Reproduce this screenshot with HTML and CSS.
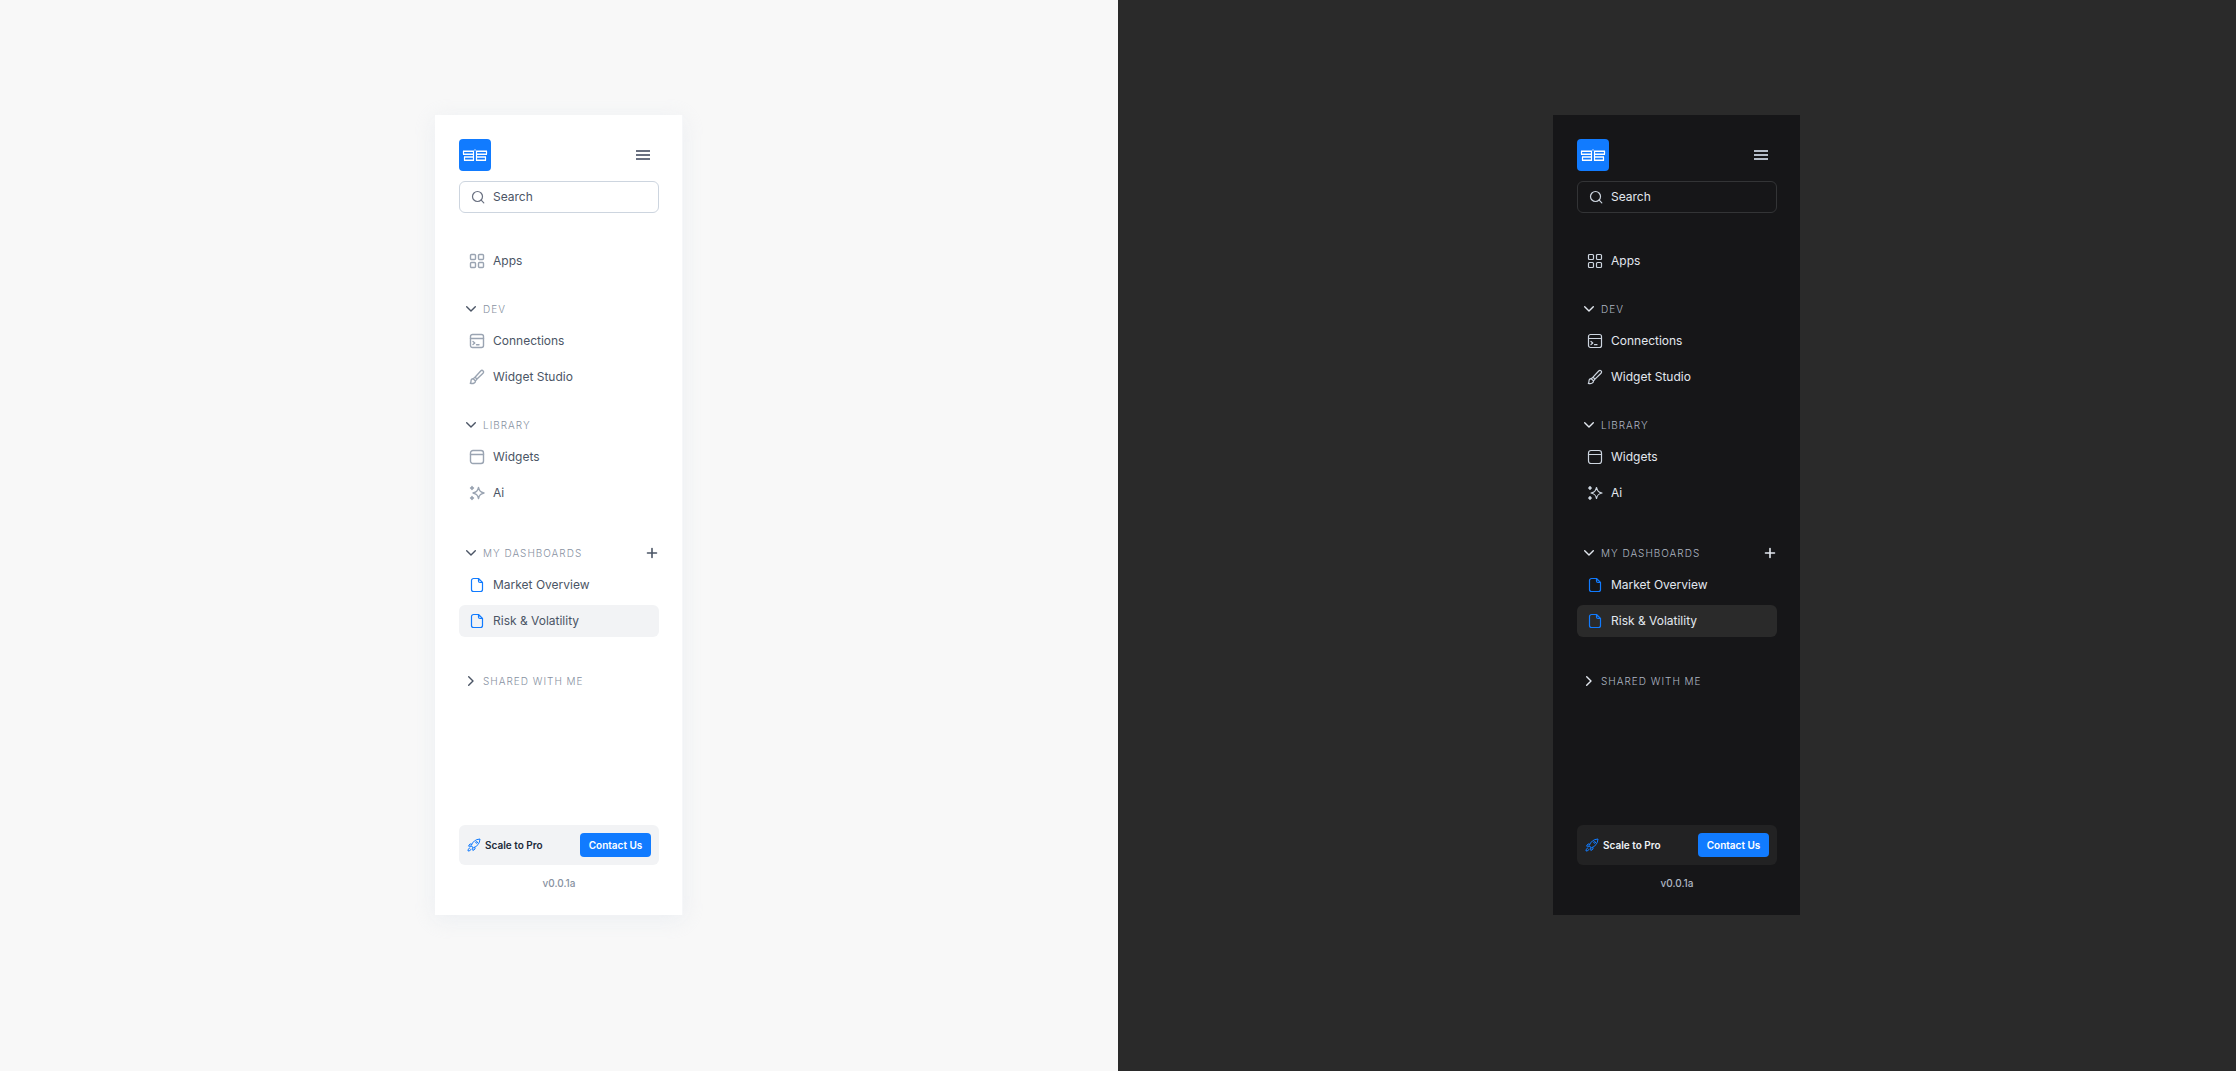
FILE: index.html
```html
<!DOCTYPE html>
<html lang="en">
<head>
<meta charset="utf-8">
<title>Sidebar</title>
<link rel="stylesheet" href="styles.css">
</head>
<body>
<svg class="sprite" aria-hidden="true">
  <symbol id="logo" viewBox="0 0 32 32"><path stroke-width="1.600" d="M4 12.200h11M4 15.200h11M5 18h10M5 21.200h10M17 12.200h11M17 15.200h11M17 18h10M17 21.200h10"/><path stroke-width="1.200" d="M4.500 12v3M14.500 12v9.500M5.500 18v3.500M27.500 12v3M17.500 12v9.500M26.500 18v3.500M15.300 11h1.400"/></symbol>
  <symbol id="menu" viewBox="0 0 16 16"><path d="M1 4h14M1 8h14M1 12h14"/></symbol>
  <symbol id="search" viewBox="0 0 14 14"><circle cx="6.500" cy="6.500" r="5"/><path d="m10.200 10.200 2.600 2.600"/></symbol>
  <symbol id="apps" viewBox="0 0 16 16"><rect x="1.500" y="1.500" width="5" height="5" rx="1"/><rect x="9.500" y="1.500" width="5" height="5" rx="1"/><rect x="1.500" y="9.500" width="5" height="5" rx="1"/><rect x="9.500" y="9.500" width="5" height="5" rx="1"/></symbol>
  <symbol id="terminal" viewBox="0 0 16 16"><rect x="1.500" y="1.500" width="13" height="13" rx="2"/><path d="M1.500 5.500h13M4 8.500l1.800 1.500L4 11.500M7.500 11.700h2.500"/></symbol>
  <symbol id="brush" viewBox="0 0 16 16"><path d="M6 8.200 11.700 2c.7-.7 1.800-.7 2.400-.1.600.7.500 1.700-.1 2.400L8 10.100zM6 8.200l-1.800 1.500 2.300 2.200L8 10.100M4.200 9.700c-1.300-.1-2.200.9-2.200 2.200 0 1.200-.2 1.800-.7 2.400 2.400.6 5.200.1 5.200-2.400"/></symbol>
  <symbol id="window" viewBox="0 0 16 16"><rect x="1.500" y="1.500" width="13" height="13" rx="2.500"/><path d="M1.500 5.500h13"/></symbol>
  <symbol id="sparkles" viewBox="0 0 16 16"><path d="M9.500 2.500c.8 3.600 1.900 4.700 5.500 5.500-3.600.8-4.700 1.900-5.500 5.500C8.700 9.900 7.600 8.800 4 8c3.600-.8 4.700-1.900 5.500-5.500z"/><path d="M3 1.500v3M1.500 3h3M3 11.500v3M1.500 13h3"/><circle cx="3" cy="3" r=".8"/><circle cx="3" cy="13" r=".8"/></symbol>
  <symbol id="file" viewBox="0 0 16 16"><path d="M9.500 1.500h-5a2 2 0 0 0-2 2v9a2 2 0 0 0 2 2h7a2 2 0 0 0 2-2V5.500zM9.500 1.500v2.500a1.500 1.500 0 0 0 1.500 1.500h2.500"/></symbol>
  <symbol id="chevron" viewBox="0 0 16 16"><path d="m3.700 5.700 4.300 4.300 4.300-4.300"/></symbol>
  <symbol id="plus" viewBox="0 0 14 14"><path d="M7 2.500v9M2.500 7h9"/></symbol>
  <symbol id="rocket" viewBox="0 0 14 14"><path d="M4.300 7.200C5.700 3.800 8.300 1.300 13 1c-.3 4.700-2.800 7.300-6.200 8.700zM4.700 6.300 3 5.900 1.500 8.100l2.800.3M7.700 9.300 8.100 11l-2.200 1.500-.3-2.800M2.800 9.900c-1.400.3-1.700 1.600-1.800 3.100 1.500-.1 2.800-.4 3.100-1.800"/><circle cx="9.600" cy="4.400" r=".9"/></symbol>
</svg>
<main class="themes">
  <section class="theme light">
    <aside class="sidebar">
      <header class="top">
        <a class="logo" href="#" aria-label="Home"><svg><use href="#logo"/></svg></a>
        <button class="menu" aria-label="Toggle menu"><svg class="icon"><use href="#menu"/></svg></button>
      </header>
      <label class="search"><svg class="icon small"><use href="#search"/></svg><input type="search" placeholder="Search" aria-label="Search"></label>
      <nav class="nav">
        <a class="item" href="#"><svg class="icon"><use href="#apps"/></svg>Apps</a>
        <div class="group">
          <button class="heading"><svg class="icon"><use href="#chevron"/></svg>DEV</button>
          <a class="item" href="#"><svg class="icon"><use href="#terminal"/></svg>Connections</a>
          <a class="item" href="#"><svg class="icon"><use href="#brush"/></svg>Widget Studio</a>
        </div>
        <div class="group">
          <button class="heading"><svg class="icon"><use href="#chevron"/></svg>LIBRARY</button>
          <a class="item" href="#"><svg class="icon"><use href="#window"/></svg>Widgets</a>
          <a class="item" href="#"><svg class="icon"><use href="#sparkles"/></svg>Ai</a>
        </div>
        <div class="group spaced">
          <div class="row">
            <button class="heading"><svg class="icon"><use href="#chevron"/></svg>MY DASHBOARDS</button>
            <button class="add" aria-label="Add dashboard"><svg class="icon small"><use href="#plus"/></svg></button>
          </div>
          <a class="item board" href="#"><svg class="icon"><use href="#file"/></svg>Market Overview</a>
          <a class="item board active" href="#" aria-current="page"><svg class="icon"><use href="#file"/></svg>Risk &amp; Volatility</a>
        </div>
        <div class="group spaced">
          <button class="heading closed" aria-expanded="false"><svg class="icon"><use href="#chevron"/></svg>SHARED WITH ME</button>
        </div>
      </nav>
      <footer class="bottom">
        <div class="upgrade">
          <svg class="icon small"><use href="#rocket"/></svg>
          <span class="plan">Scale to Pro</span>
          <button class="contact">Contact Us</button>
        </div>
        <p class="version">v0.0.1a</p>
      </footer>
    </aside>
  </section>
  <section class="theme dark">
    <aside class="sidebar">
      <header class="top">
        <a class="logo" href="#" aria-label="Home"><svg><use href="#logo"/></svg></a>
        <button class="menu" aria-label="Toggle menu"><svg class="icon"><use href="#menu"/></svg></button>
      </header>
      <label class="search"><svg class="icon small"><use href="#search"/></svg><input type="search" placeholder="Search" aria-label="Search"></label>
      <nav class="nav">
        <a class="item" href="#"><svg class="icon"><use href="#apps"/></svg>Apps</a>
        <div class="group">
          <button class="heading"><svg class="icon"><use href="#chevron"/></svg>DEV</button>
          <a class="item" href="#"><svg class="icon"><use href="#terminal"/></svg>Connections</a>
          <a class="item" href="#"><svg class="icon"><use href="#brush"/></svg>Widget Studio</a>
        </div>
        <div class="group">
          <button class="heading"><svg class="icon"><use href="#chevron"/></svg>LIBRARY</button>
          <a class="item" href="#"><svg class="icon"><use href="#window"/></svg>Widgets</a>
          <a class="item" href="#"><svg class="icon"><use href="#sparkles"/></svg>Ai</a>
        </div>
        <div class="group spaced">
          <div class="row">
            <button class="heading"><svg class="icon"><use href="#chevron"/></svg>MY DASHBOARDS</button>
            <button class="add" aria-label="Add dashboard"><svg class="icon small"><use href="#plus"/></svg></button>
          </div>
          <a class="item board" href="#"><svg class="icon"><use href="#file"/></svg>Market Overview</a>
          <a class="item board active" href="#" aria-current="page"><svg class="icon"><use href="#file"/></svg>Risk &amp; Volatility</a>
        </div>
        <div class="group spaced">
          <button class="heading closed" aria-expanded="false"><svg class="icon"><use href="#chevron"/></svg>SHARED WITH ME</button>
        </div>
      </nav>
      <footer class="bottom">
        <div class="upgrade">
          <svg class="icon small"><use href="#rocket"/></svg>
          <span class="plan">Scale to Pro</span>
          <button class="contact">Contact Us</button>
        </div>
        <p class="version">v0.0.1a</p>
      </footer>
    </aside>
  </section>
</main>
</body>
</html>
```
FILE: styles.css
```css
* { box-sizing: border-box; }

body {
  margin: 0;
  font-family: Inter, "Liberation Sans", sans-serif;
  font-size: 12px;
  line-height: 16px;
}

button {
  padding: 0;
  border: 0;
  background: none;
  font: inherit;
  color: inherit;
  cursor: pointer;
}

a { color: inherit; text-decoration: none; }

.sprite { display: none; }

.light {
  --page: #f8f8f8;
  --panel: #ffffff;
  --edge: #f6f7f9;
  --field: #cdd5df;
  --text: #4b5565;
  --icon: #9aa4b2;
  --control: #697080;
  --arrow: #4b5565;
  --caption: #8791a1;
  --strong: #202939;
  --card: #f2f3f5;
  --active: #f2f3f5;
  --shadow: 0 4px 20px #e3e8ef99;
}

.dark {
  --page: #2a2a2a;
  --panel: #161618;
  --edge: #2a2a2a;
  --field: #333436;
  --text: #e3e8ef;
  --icon: #cdd5df;
  --control: #b4bcc8;
  --arrow: #e3e8ef;
  --caption: #b0b8c4;
  --strong: #eef2f6;
  --card: #222223;
  --active: #2a2a2a;
  --shadow: none;
}

.themes {
  display: grid;
  grid-template-columns: 1fr 1fr;
  min-height: 100vh;
}

.theme {
  display: flex;
  justify-content: center;
  align-items: flex-start;
  padding: 115px 24px 48px;
  background: var(--page);
  color: var(--text);
}

.sidebar {
  display: flex;
  flex-direction: column;
  width: 248px;
  min-height: 800px;
  padding: 24px 23px 24px 24px;
  border-right: 1px solid var(--edge);
  background: var(--panel);
  box-shadow: var(--shadow);
}

.icon {
  flex: none;
  width: 16px;
  height: 16px;
  fill: none;
  stroke: var(--icon);
  stroke-width: 1.4;
  stroke-linecap: round;
  stroke-linejoin: round;
}

.icon.small { width: 14px; height: 14px; }

.top {
  display: flex;
  justify-content: space-between;
  align-items: center;
  padding-right: 8px;
}

.logo {
  width: 32px;
  height: 32px;
  border-radius: 4px;
  background: #117bff;
}

.logo svg {
  display: block;
  width: 32px;
  height: 32px;
  fill: none;
  stroke: #ffffff;
}

.menu { display: flex; }
.menu .icon { stroke: var(--control); stroke-width: 2; stroke-linecap: butt; }

.search {
  display: flex;
  align-items: center;
  gap: 8px;
  height: 32px;
  margin-top: 10px;
  padding: 0 11px;
  border: 1px solid var(--field);
  border-radius: 6px;
}

.search .icon { stroke: var(--control); stroke-width: 1.2; }
.dark .search .icon { stroke: var(--icon); }

.search input {
  flex: 1;
  min-width: 0;
  padding: 0;
  border: 0;
  outline: 0;
  background: none;
  font: inherit;
  color: var(--text);
}

.search input::placeholder { color: var(--text); opacity: 1; }

.nav { margin-top: 32px; }

.item {
  display: flex;
  align-items: center;
  gap: 8px;
  height: 32px;
  padding: 0 10px;
  border-radius: 6px;
}

.dark .item .icon, .board .icon { stroke-width: 1.2; }

.group {
  display: flex;
  flex-direction: column;
  gap: 4px;
  margin-top: 20px;
}

.group.spaced { margin-top: 32px; }

.row { display: flex; justify-content: space-between; align-items: center; }

.heading {
  display: flex;
  align-items: center;
  gap: 4px;
  height: 24px;
  padding-left: 4px;
  font-size: 10px;
  font-weight: 300;
  letter-spacing: 1px;
  color: var(--caption);
}

.heading .icon, .add .icon { stroke: var(--arrow); }
.add .icon { stroke-width: 1.6; }
.heading.closed .icon { transform: rotate(-90deg); }
.add { display: flex; }
.item.board .icon { stroke: #117bff; }
.active { background: var(--active); }

.bottom { margin-top: auto; }

.upgrade {
  display: flex;
  align-items: center;
  gap: 4px;
  height: 40px;
  padding: 0 8px;
  border-radius: 6px;
  background: var(--card);
  font-size: 10px;
  font-weight: 600;
}

.upgrade .icon { stroke: #117bff; stroke-width: 1; }
.plan { flex: 1; color: var(--strong); }

.contact {
  width: 71px;
  height: 24px;
  border-radius: 4px;
  background: #117bff;
  color: #ffffff;
}

.version {
  margin: 10px 0 0;
  font-size: 10px;
  font-weight: 500;
  text-align: center;
  color: var(--caption);
}
```
